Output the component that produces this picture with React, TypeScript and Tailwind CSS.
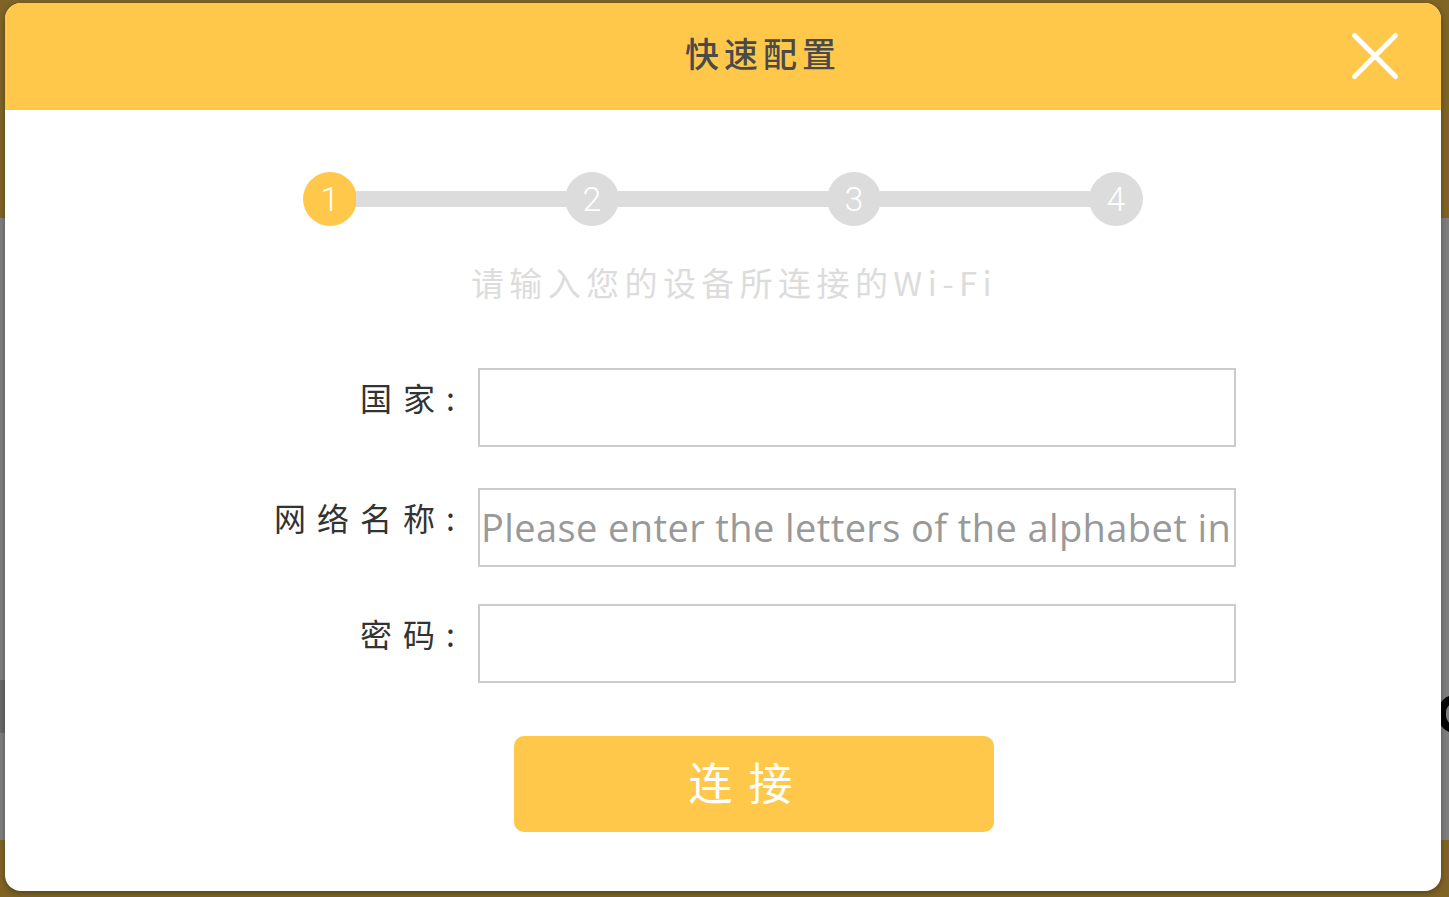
import React from "react";

const Y = "bg-[#FFC84B]";

function Step({ n, active }: { n: number; active?: boolean }) {
  return (
    <div
      className={`w-[54px] h-[54px] rounded-full flex items-center justify-center text-white text-[34px] font-light leading-none font-['Roboto',sans-serif] ${
        active ? "bg-[#FFC84B]" : "bg-[#DCDCDC]"
      }`}
    >
      {n}
    </div>
  );
}

function Line() {
  return <div className="w-[210px] h-[16px] bg-[#DCDCDC] -mx-px" />;
}

function Row({ label, placeholder, className }: { label: string; placeholder?: string; className?: string }) {
  return (
    <div className={`flex items-start ${className ?? ""}`}>
      <div className="w-[473px] flex justify-end pt-[7px] pr-[12px]">
        <span className="text-[32px] leading-[44px] tracking-[11px] text-[#333]">{label}</span>
      </div>
      <input
        className="w-[758px] h-[79px] border-2 border-[#CCCCCC] bg-white outline-none px-[1px] pb-[2px] text-[38px] tracking-[0.4px] font-['Open_Sans',sans-serif] placeholder:text-[#999]"
        placeholder={placeholder}
      />
    </div>
  );
}

export default function App() {
  return (
    <div className="relative w-[1449px] h-[897px] overflow-hidden font-['Noto_Sans_CJK_SC','Noto_Sans',sans-serif]">
      {/* underlying page */}
      <div className="flex flex-col h-full">
        <div className={`h-[218px] ${Y}`} />
        <div className="flex-1 bg-white relative">
          <div className="absolute left-0 top-[462px] w-[5px] h-[53px] bg-[#d4d4d4]" />
          <div className="absolute left-[1438px] top-[477px] w-[34px] h-[38px] rounded-full border-[8px] border-black" />
        </div>
        <div className={`h-[57px] ${Y}`} />
      </div>
      <div className="absolute inset-0 bg-black/50" />

      {/* modal */}
      <div className="absolute left-[5px] top-[3px] w-[1436px] h-[888px] bg-white rounded-[16px] overflow-hidden shadow-[0_2px_6px_rgba(0,0,0,0.35)] flex flex-col">
        <div className={`relative h-[107px] ${Y} flex items-center justify-center pl-[80px] pb-[7px]`}>
          <span className="text-[34px] tracking-[5px] text-[#4a4a4a] font-medium leading-none">快速配置</span>
          <svg
            className="absolute right-[40px] top-[27px]"
            width="52"
            height="52"
            viewBox="0 0 52 52"
          >
            <path d="M5.5 5.5 L46.5 46.5 M46.5 5.5 L5.5 46.5" stroke="white" strokeWidth="5" strokeLinecap="round" />
          </svg>
        </div>

        <div className="mt-[62px] flex items-center justify-center">
          <Step n={1} active />
          <Line />
          <Step n={2} />
          <Line />
          <Step n={3} />
          <Line />
          <Step n={4} />
        </div>

        <div className="mt-[34px] flex justify-center pl-[22px]">
          <span className="text-[33px] leading-[44px] tracking-[5.4px] text-[#DCDCDC]">请输入您的设备所连接的Wi-Fi</span>
        </div>

        <Row label="国家:" className="mt-[64px]" />
        <Row label="网络名称:" placeholder="Please enter the letters of the alphabet in" className="mt-[41px]" />
        <Row label="密码:" className="mt-[37px]" />

        <div className="mt-[53px] flex justify-center pl-[61px]">
          <button className="w-[480px] h-[96px] rounded-[10px] bg-[#FFC84B] text-white text-[44px] tracking-[16px] flex items-center justify-center pr-[10px] pb-[6px]">
            连接
          </button>
        </div>
      </div>
    </div>
  );
}
